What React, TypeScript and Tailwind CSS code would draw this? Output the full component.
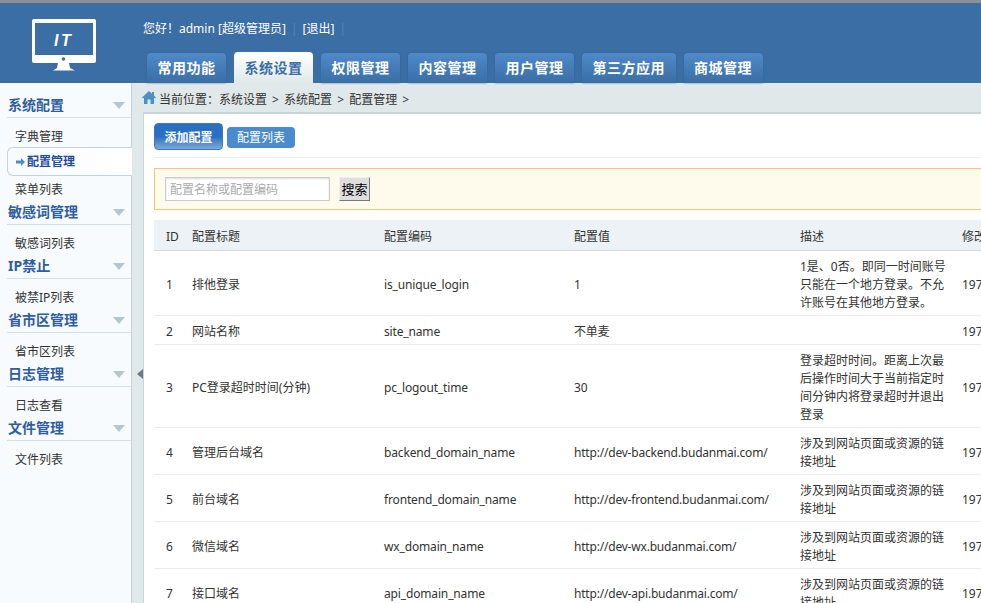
const tabs = ["常用功能", "系统设置", "权限管理", "内容管理", "用户管理", "第三方应用", "商城管理"];

const groups = [
  { title: "系统配置", items: ["字典管理", "配置管理", "菜单列表"] },
  { title: "敏感词管理", items: ["敏感词列表"] },
  { title: "IP禁止", items: ["被禁IP列表"] },
  { title: "省市区管理", items: ["省市区列表"] },
  { title: "日志管理", items: ["日志查看"] },
  { title: "文件管理", items: ["文件列表"] },
];

const rows = [
  { id: 1, title: "排他登录", code: "is_unique_login", value: "1", desc: "1是、0否。即同一时间账号只能在一个地方登录。不允许账号在其他地方登录。" },
  { id: 2, title: "网站名称", code: "site_name", value: "不单麦", desc: "" },
  { id: 3, title: "PC登录超时时间(分钟)", code: "pc_logout_time", value: "30", desc: "登录超时时间。距离上次最后操作时间大于当前指定时间分钟内将登录超时并退出登录" },
  { id: 4, title: "管理后台域名", code: "backend_domain_name", value: "http://dev-backend.budanmai.com/", desc: "涉及到网站页面或资源的链接地址" },
  { id: 5, title: "前台域名", code: "frontend_domain_name", value: "http://dev-frontend.budanmai.com/", desc: "涉及到网站页面或资源的链接地址" },
  { id: 6, title: "微信域名", code: "wx_domain_name", value: "http://dev-wx.budanmai.com/", desc: "涉及到网站页面或资源的链接地址" },
  { id: 7, title: "接口域名", code: "api_domain_name", value: "http://dev-api.budanmai.com/", desc: "涉及到网站页面或资源的链接地址" },
];

function Logo() {
  return (
    <svg width="66" height="54" viewBox="0 0 66 54" className="shrink-0">
      <rect x="1" y="0" width="64" height="44" rx="2" fill="#fff" />
      <rect x="4" y="4" width="58" height="32" fill="#3b6ea5" />
      <circle cx="32.5" cy="40" r="1.8" fill="#3b6ea5" />
      <path d="M27 44h11l1 5 5 2.5H22l4-2.5z" fill="#fff" />
      <text x="23" y="27" fill="#fff" fontSize="16" fontStyle="italic" fontWeight="bold" letterSpacing="2.5" fontFamily="Liberation Sans, sans-serif">IT</text>
    </svg>
  );
}

export default function App() {
  return (
    <div className="relative flex h-[603px] flex-col overflow-hidden bg-[#e1e8ea] font-['Noto_Sans','Noto_Sans_CJK_SC',sans-serif] text-xs text-[#333]">
      {/* Top bar */}
      <header className="flex h-[83px] shrink-0 border-t-[3px] border-[#8f8f8f] bg-[#3b6ea5]">
        <div className="w-[143px] shrink-0 pl-[31px] pt-[16px]">
          <Logo />
        </div>
        <div className="flex flex-col">
          <div className="flex h-[49px] items-start pt-[18px] text-white">
            <span>您好！admin [超级管理员]</span>
            <span className="mx-[5px] text-[#5585ba]">|</span>
            <span>[退出]</span>
            <span className="ml-[5px] text-[#5585ba]">|</span>
          </div>
          <div className="flex items-end gap-2 pl-1">
            {tabs.map((t) => {
              const on = t === "系统设置";
              return (
                <div
                  key={t}
                  className={
                    on
                      ? "flex h-[31px] items-center rounded-t bg-gradient-to-b from-white to-[#e1e8ea] px-[10.5px] text-sm font-bold tracking-[0.5px] text-[#3b6ea5]"
                      : "flex h-[30px] items-center rounded-t bg-gradient-to-b from-[#4f8ac8] to-[#3b6ea5] px-[10.5px] text-sm font-bold tracking-[0.5px] text-white shadow-[0_0_2px_#2f5f95]"
                  }
                >
                  {t}
                </div>
              );
            })}
          </div>
        </div>
      </header>

      <div className="flex min-h-0 flex-1">
        {/* Sidebar */}
        <aside className="w-[132px] shrink-0 border-r border-[#c5d3dc] bg-[#f7fbfd] pl-[7px] pt-[13px]">
          {groups.map((g) => (
            <div key={g.title}>
              <div className="flex h-[22px] items-center justify-between border-b border-[#d3e0e8] pb-[2px] pr-[6px] text-sm font-bold leading-none text-[#2f5d9f]">
                <span className="mb-[2px] pl-px">{g.title}</span>
                <svg width="12" height="7" viewBox="0 0 12 7">
                  <path d="M0 0h12L6 7z" fill="#b5c6cd" />
                </svg>
              </div>
              <ul className="pt-[5px]">
                {g.items.map((it) => (
                  <li
                    key={it}
                    className={
                      it === "配置管理"
                        ? "relative z-10 -mr-px -mt-[3px] flex h-[29px] items-center rounded-l-md border border-r-0 border-[#c5d3dc] bg-gradient-to-r from-[#f7fbfd] to-white pl-[8px] pt-px font-bold text-[#1f4a9c]"
                        : "flex h-[27px] items-center pl-2"
                    }
                  >
                    {it === "配置管理" && (
                      <svg width="10" height="8" viewBox="0 0 10 8" className="mr-px shrink-0">
                        <path d="M0 2.5h5V0l4 4-4 4V5.500H0z" fill="#4a90c8" />
                      </svg>
                    )}
                    {it}
                  </li>
                ))}
              </ul>
            </div>
          ))}
        </aside>

        {/* Collapse gutter */}
        <div className="flex w-[11px] shrink-0 items-start pl-[5px] pt-[286px]">
          <svg width="6" height="10" viewBox="0 0 6 10">
            <path d="M6 0v10L0 5z" fill="#6f7a80" />
          </svg>
        </div>

        {/* Main */}
        <main className="flex min-w-0 flex-1 flex-col">
          <div className="flex h-[29px] shrink-0 items-center pt-[3px]">
            <svg width="14" height="13" viewBox="0 0 14 13" className="-ml-px mb-[3px] mr-[3px] shrink-0">
              <path d="M7 0 0 6.500l1 1 1-.9V13h3.500V8.500h3V13H12V6.600l1 .9 1-1-2-1.900V1h-2v1.800z" fill="#4a90c8" />
            </svg>
            <span className="pt-[2px] [word-spacing:2px]">当前位置：系统设置 &gt; 系统配置 &gt; 配置管理 &gt;</span>
          </div>
          <div className="min-h-0 flex-1 overflow-hidden border-l border-t-2 border-[#c5d3dc] bg-white pl-[10px]">
            <div className="flex h-[44px] w-[900px] items-end gap-1 border-b border-[#eee] pb-[7px]">
              <button className="flex h-[27px] w-[69px] items-center justify-center rounded-sm border border-[#3a78c0] bg-gradient-to-b from-[#2a70c0] via-[#2a70c0] to-[#7fa9d8] pt-[3px] font-bold text-white">
                添加配置
              </button>
              <button className="mb-[2px] flex h-[21px] w-[68px] items-center justify-center rounded-sm bg-[#4a8bd0] pt-px text-white">
                配置列表
              </button>
            </div>
            <div className="mt-[10px] flex h-[42px] w-[900px] items-center border border-[#fbc27e] bg-[#fffbec] pl-[10px]">
              <input
                placeholder="配置名称或配置编码"
                className="h-[24px] w-[165px] border border-[#ccc] bg-white px-[4px] shadow-[inset_0_1px_2px_#ddd] outline-none placeholder:text-[#aaa]"
              />
              <button className="ml-[9px] h-[24px] w-[31px] border border-b-[#777] border-l-[#eee] border-r-[#777] border-t-[#eee] bg-[#dedede] pt-px text-[13px] leading-none text-black">
                搜索
              </button>
            </div>
            <table className="mt-[10px] w-[900px] table-fixed border-collapse">
              <colgroup>
                <col className="w-[26px]" />
                <col className="w-[192px]" />
                <col className="w-[190px]" />
                <col className="w-[226px]" />
                <col className="w-[162px]" />
                <col className="w-[104px]" />
              </colgroup>
              <thead>
                <tr className="h-[30px] border-b border-[#cfdce6] bg-[#edf2f6] text-left">
                  <th className="pl-3 pt-[5px] font-normal">ID</th>
                  <th className="pl-3 pt-[5px] font-normal">配置标题</th>
                  <th className="pl-3 pt-[5px] font-normal">配置编码</th>
                  <th className="pl-3 pt-[5px] font-normal">配置值</th>
                  <th className="pl-3 pt-[5px] font-normal">描述</th>
                  <th className="pl-3 pt-[5px] font-normal whitespace-nowrap">修改时间</th>
                </tr>
              </thead>
              <tbody className="leading-[18px]">
                {rows.map((r) => (
                  <tr key={r.id} className="border-b border-[#e8ecef]">
                    <td className="pb-[3px] pl-3 pt-[7px]">{r.id}</td>
                    <td className="pb-[3px] pl-3 pt-[7px]">{r.title}</td>
                    <td className="pb-[3px] pl-3 pt-[7px] tracking-[-0.15px]">{r.code}</td>
                    <td className="pb-[3px] pl-3 pt-[7px] tracking-[-0.2px] whitespace-nowrap">{r.value}</td>
                    <td className="pb-[3px] pl-3 pr-[2px] pt-[7px]">{r.desc}</td>
                    <td className="pb-[3px] pl-3 pt-[7px] whitespace-nowrap">1970-01-01</td>
                  </tr>
                ))}
              </tbody>
            </table>
          </div>
        </main>
      </div>
    </div>
  );
}
